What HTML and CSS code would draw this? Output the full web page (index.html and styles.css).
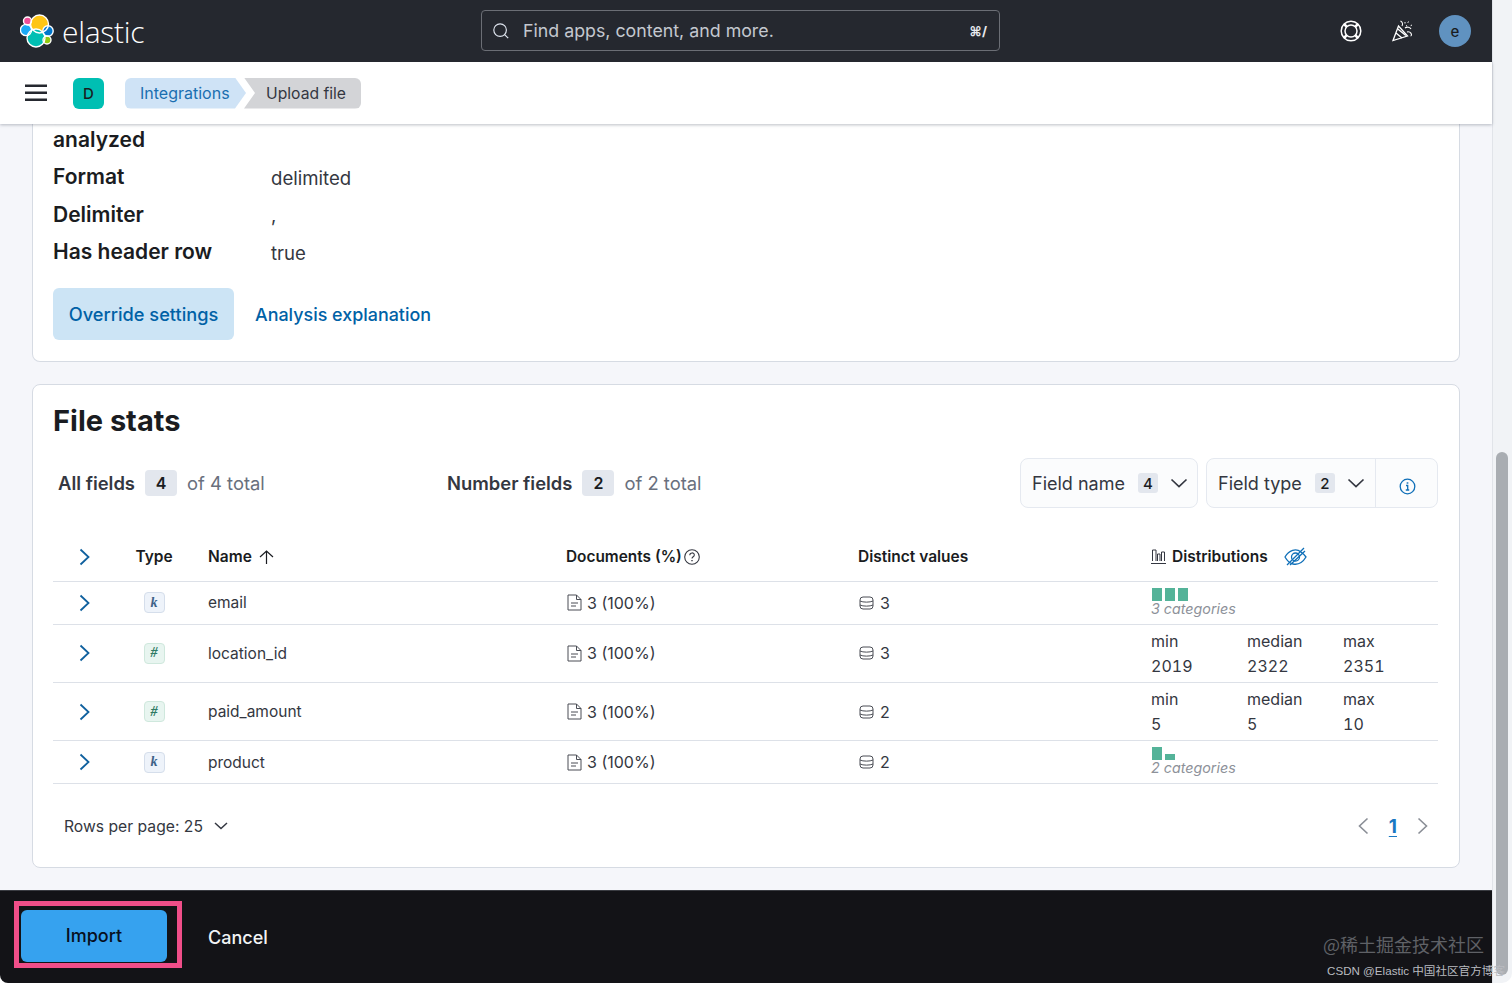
FILE: index.html
```html
<!DOCTYPE html>
<html lang="en">
<head>
<meta charset="utf-8">
<title>Upload file - Elastic</title>
<link rel="stylesheet" href="styles.css">
</head>
<body>
<div class="window">
  <div class="main">
    <header class="topbar">
      <div class="brand">
        <svg class="logo" width="34" height="34" viewBox="0 0 34 34">
          <circle cx="19.5" cy="10" r="9" fill="#fec514"/>
          <circle cx="7.5" cy="7" r="4" fill="#f04e98"/>
          <circle cx="6" cy="16" r="5.6" fill="#1ba9f5"/>
          <circle cx="28" cy="17" r="5.2" fill="#0077cc"/>
          <circle cx="16" cy="24" r="9" fill="#00bfb3"/>
          <circle cx="27" cy="26" r="4" fill="#93c90e"/>
          <g fill="none" stroke="#fff" stroke-width="1.4">
            <circle cx="19.5" cy="10" r="9"/>
            <circle cx="16" cy="24" r="9"/>
            <circle cx="6" cy="16" r="5.6"/>
            <circle cx="28" cy="17" r="5.2"/>
            <circle cx="7.5" cy="7" r="4"/>
            <circle cx="27" cy="26" r="4"/>
          </g>
        </svg>
        <span class="wordmark">elastic</span>
      </div>
      <div class="search">
        <svg width="18" height="18" viewBox="0 0 20 20" fill="none" stroke="#dfe5ef" stroke-width="1.3"><circle cx="9" cy="9" r="7"/><path d="M14 14l4 4"/></svg>
        <span class="search-text">Find apps, content, and more.</span>
        <span class="search-key">⌘/</span>
      </div>
      <div class="top-icons">
        <svg width="24" height="24" viewBox="0 0 24 24" fill="none" stroke="#fff" stroke-width="1.5"><circle cx="12" cy="12" r="9.8"/><circle cx="12" cy="12" r="6"/><path d="M5 5l2.8 2.8M19 5l-2.8 2.8M5 19l2.8-2.8M19 19l-2.8-2.8" stroke-width="2.6"/></svg>
        <svg width="24" height="24" viewBox="0 0 24 24" fill="none" stroke="#fff" stroke-width="1.3"><path d="M7.5 7L2 21.5 16.5 17z"/><path d="M5 14l6 5M6.8 10l8 6.4"/><path d="M9.5 2c2 1 2.500 3 1.500 5M14 9c2-1.500 5-1 6 1M16 13c2-.5 4 .5 4.500 2.500 0 1-.5 1.500-1 1.500" stroke-width="1.100"/><path d="M14 3v2M17.500 2.500l-1 2M21 6l-2 1M15 6.500l1 .5" stroke-width="1" stroke-dasharray="1.500 1"/></svg>
        <span class="avatar">e</span>
      </div>
    </header>

    <nav class="subbar">
      <svg class="menu" width="22" height="18" viewBox="0 0 22 18" fill="#25282f"><rect width="22" height="2.500" y="0.500"/><rect width="22" height="2.500" y="7.500"/><rect width="22" height="2.500" y="14.500"/></svg>
      <span class="space">D</span>
      <div class="crumbs">
        <span class="crumb crumb-link">Integrations</span>
        <span class="crumb crumb-current">Upload file</span>
      </div>
    </nav>

    <main class="content">
      <section class="card card-summary">
        <dl class="summary">
          <dt>analyzed</dt><dd></dd>
          <dt>Format</dt><dd>delimited</dd>
          <dt>Delimiter</dt><dd>,</dd>
          <dt>Has header row</dt><dd>true</dd>
        </dl>
        <div class="summary-actions">
          <button class="btn-soft">Override settings</button>
          <a class="link-strong">Analysis explanation</a>
        </div>
      </section>

      <section class="card card-stats">
        <h2 class="stats-title">File stats</h2>
        <div class="stats-bar">
          <div class="stat stat-all"><b>All fields</b><span class="count">4</span><span class="muted">of 4 total</span></div>
          <div class="stat"><b>Number fields</b><span class="count">2</span><span class="muted">of 2 total</span></div>
          <div class="filters">
            <div class="filter filter-name">Field name<span class="mini-count">4</span><svg class="chev-down" width="18" height="10" viewBox="0 0 18 10" fill="none" stroke="#343741" stroke-width="1.700"><path d="M1.500 1.500L9 8.500l7.500-7"/></svg></div>
            <div class="filter-group">
              <div class="filter filter-type">Field type<span class="mini-count">2</span><svg class="chev-down" width="18" height="10" viewBox="0 0 18 10" fill="none" stroke="#343741" stroke-width="1.700"><path d="M1.500 1.500L9 8.500l7.500-7"/></svg></div>
              <div class="filter-info"><svg width="17" height="17" viewBox="0 0 17 17" fill="none" stroke="#0f6fb8" stroke-width="1.300"><circle cx="8.500" cy="8.500" r="7.300"/><path d="M7 7.500h1.700v4.500M6.800 12h3.400" /><path d="M8.500 4.300v1.400" stroke-width="1.700"/></svg></div>
            </div>
          </div>
        </div>

        <div class="table">
          <div class="row row-head">
            <svg class="expander" width="11" height="18" viewBox="0 0 11 18" fill="none" stroke="#0f609e" stroke-width="1.800"><path d="M1.500 1.500L9.500 9l-8 7.500"/></svg>
            <span class="cell-type">Type</span>
            <span class="cell-name">Name <svg class="sort" width="15" height="14" viewBox="0 0 15 14" fill="none" stroke="#1a1c21" stroke-width="1.200"><path d="M7.500 14V1M1 7l6.500-6L14 7"/></svg></span>
            <span class="cell-doc">Documents (%) <svg width="16" height="16" viewBox="0 0 16 16" fill="none" stroke="#343741" stroke-width="1.100"><circle cx="8" cy="8" r="7.300"/><path d="M5.800 6.200c0-3 4.500-3 4.500-.2 0 1.800-2.300 1.700-2.300 3.600" /><path d="M8 11v1.300" stroke-width="1.400"/></svg></span>
            <span>Distinct values</span>
            <span class="cell-dist"><svg width="15" height="15" viewBox="0 0 15 15" fill="none" stroke="#343741" stroke-width="1"><path d="M0 14.500h15M1.500 12V1h3.500v11M6.500 12V5h2.500v7M10.500 12V3h3v9"/></svg> Distributions <svg class="eye" width="23" height="19" viewBox="0 0 23 19" fill="none" stroke="#0f6fb8" stroke-width="1.300"><path d="M1 10c4-7 11-9 16-5 2 1.500 3.500 3 5 5-3 5-8 8-13 7-3-.5-6-3.500-8-7z"/><circle cx="11.500" cy="10" r="4"/><path d="M3 18L20 1M6 18L21 4"/></svg></span>
          </div>

          <div class="row row-a">
            <svg class="expander" width="11" height="18" viewBox="0 0 11 18" fill="none" stroke="#0f609e" stroke-width="1.800"><path d="M1.500 1.500L9.500 9l-8 7.500"/></svg>
            <span class="cell-type"><i class="token token-k">k</i></span>
            <span class="cell-name">email</span>
            <span class="cell-doc"><svg class="doc" width="15" height="17" viewBox="0 0 15 17" fill="none" stroke="#4a4d55" stroke-width="1"><path d="M1 1h8.500L14 5.500V16H1zM9.500 1v4.500H14M4 9h7M4 12h5"/></svg> 3 (100%)</span>
            <span class="cell-val"><svg class="db" width="15" height="14" viewBox="0 0 15 14" fill="none" stroke="#4a4d55" stroke-width="1"><rect x="1" y="1" width="13" height="12" rx="3"/><path d="M1 5c3 1.500 10 1.500 13 0M1 9c3 1.500 10 1.500 13 0"/></svg> 3</span>
            <div class="bars-cell"><div class="bars"><i class="bar"></i><i class="bar"></i><i class="bar"></i></div><em>3 categories</em></div>
          </div>

          <div class="row row-b">
            <svg class="expander" width="11" height="18" viewBox="0 0 11 18" fill="none" stroke="#0f609e" stroke-width="1.800"><path d="M1.500 1.500L9.500 9l-8 7.500"/></svg>
            <span class="cell-type"><i class="token token-n">#</i></span>
            <span class="cell-name">location_id</span>
            <span class="cell-doc"><svg class="doc" width="15" height="17" viewBox="0 0 15 17" fill="none" stroke="#4a4d55" stroke-width="1"><path d="M1 1h8.500L14 5.500V16H1zM9.500 1v4.500H14M4 9h7M4 12h5"/></svg> 3 (100%)</span>
            <span class="cell-val"><svg class="db" width="15" height="14" viewBox="0 0 15 14" fill="none" stroke="#4a4d55" stroke-width="1"><rect x="1" y="1" width="13" height="12" rx="3"/><path d="M1 5c3 1.500 10 1.500 13 0M1 9c3 1.500 10 1.500 13 0"/></svg> 3</span>
            <div class="nums"><span>min</span><span>median</span><span>max</span><span>2019</span><span>2322</span><span>2351</span></div>
          </div>

          <div class="row row-b">
            <svg class="expander" width="11" height="18" viewBox="0 0 11 18" fill="none" stroke="#0f609e" stroke-width="1.800"><path d="M1.500 1.500L9.500 9l-8 7.500"/></svg>
            <span class="cell-type"><i class="token token-n">#</i></span>
            <span class="cell-name">paid_amount</span>
            <span class="cell-doc"><svg class="doc" width="15" height="17" viewBox="0 0 15 17" fill="none" stroke="#4a4d55" stroke-width="1"><path d="M1 1h8.500L14 5.500V16H1zM9.500 1v4.500H14M4 9h7M4 12h5"/></svg> 3 (100%)</span>
            <span class="cell-val"><svg class="db" width="15" height="14" viewBox="0 0 15 14" fill="none" stroke="#4a4d55" stroke-width="1"><rect x="1" y="1" width="13" height="12" rx="3"/><path d="M1 5c3 1.500 10 1.500 13 0M1 9c3 1.500 10 1.500 13 0"/></svg> 2</span>
            <div class="nums"><span>min</span><span>median</span><span>max</span><span>5</span><span>5</span><span>10</span></div>
          </div>

          <div class="row row-a">
            <svg class="expander" width="11" height="18" viewBox="0 0 11 18" fill="none" stroke="#0f609e" stroke-width="1.800"><path d="M1.500 1.500L9.500 9l-8 7.500"/></svg>
            <span class="cell-type"><i class="token token-k">k</i></span>
            <span class="cell-name">product</span>
            <span class="cell-doc"><svg class="doc" width="15" height="17" viewBox="0 0 15 17" fill="none" stroke="#4a4d55" stroke-width="1"><path d="M1 1h8.500L14 5.500V16H1zM9.500 1v4.500H14M4 9h7M4 12h5"/></svg> 3 (100%)</span>
            <span class="cell-val"><svg class="db" width="15" height="14" viewBox="0 0 15 14" fill="none" stroke="#4a4d55" stroke-width="1"><rect x="1" y="1" width="13" height="12" rx="3"/><path d="M1 5c3 1.500 10 1.500 13 0M1 9c3 1.500 10 1.500 13 0"/></svg> 2</span>
            <div class="bars-cell"><div class="bars"><i class="bar"></i><i class="bar bar-low"></i></div><em>2 categories</em></div>
          </div>
        </div>

        <div class="pager">
          <span class="rows-per">Rows per page: 25 <svg width="14" height="8" viewBox="0 0 14 8" fill="none" stroke="#343741" stroke-width="1.500"><path d="M1 1l6 5.500L13 1"/></svg></span>
          <div class="pages">
            <svg width="11" height="18" viewBox="0 0 11 18" fill="none" stroke="#8a8e96" stroke-width="1.600"><path d="M9.500 1.500L1.500 9l8 7.500"/></svg>
            <a class="page-num">1</a>
            <svg width="11" height="18" viewBox="0 0 11 18" fill="none" stroke="#8a8e96" stroke-width="1.600"><path d="M1.500 1.500L9.500 9l-8 7.500"/></svg>
          </div>
        </div>
      </section>
    </main>

    <footer class="footbar">
      <div class="highlight"><button class="btn-import">Import</button></div>
      <a class="btn-cancel">Cancel</a>
    </footer>
  </div>
  <div class="scrolltrack"><div class="scrollthumb"></div></div>
  <div class="watermark"><span class="wm-big">@稀土掘金技术社区</span><span class="wm-small">CSDN @Elastic 中国社区官方博客</span></div>
</div>
</body>
</html>
```
FILE: styles.css
```css
* { box-sizing: border-box; }
html, body { margin: 0; height: 983px; overflow: hidden; }
body { font-family: Inter, "Liberation Sans", sans-serif; color: #343741; background: #fff; }

.window { position: relative; display: flex; width: 1512px; height: 983px; overflow: hidden; border-radius: 0 0 10px 8px; }
.main { width: 1492px; height: 983px; display: flex; flex-direction: column; flex: none; }

.topbar { height: 62px; flex: none; background: #25282f; display: flex; align-items: center; padding-left: 20px; position: relative; z-index: 3; }
.brand { display: flex; align-items: center; width: 461px; }
.logo { flex: none; }
.wordmark { color: #fff; font-family: "Open Sans", Inter, sans-serif; font-size: 30px; font-weight: 300; margin-left: 8px; letter-spacing: -0.3px; }
.search { width: 519px; height: 41px; margin-bottom: 1px; border: 1px solid #6b6e75; border-radius: 4px; display: flex; align-items: center; padding: 0 12px 0 10px; }
.search-text { margin-left: 13px; color: #c4c8cf; font-size: 17.8px; flex: 1; }
.search-key { color: #e8eaee; font-size: 13px; font-weight: 700; }
.top-icons { margin-left: 339px; display: flex; align-items: center; gap: 28px; }
.avatar { width: 32px; height: 32px; border-radius: 50%; background: #6092c0; color: #1a1c21; display: flex; align-items: center; justify-content: center; font-size: 15px; font-weight: 500; margin-left: -4px; }

.subbar { height: 62px; flex: none; background: #fff; display: flex; align-items: center; padding-left: 25px; box-shadow: 0 1px 3px rgba(60,70,90,.35); position: relative; z-index: 2; }
.menu { flex: none; }
.space { width: 31px; height: 31px; border-radius: 6px; background: #00bfb3; color: #1a1c21; font-size: 15px; font-weight: 500; display: flex; align-items: center; justify-content: center; margin-left: 26px; }
.crumbs { display: flex; margin-left: 21px; }
.crumb { height: 31px; display: flex; align-items: center; font-size: 16px; }
.crumb-link { width: 121px; padding-left: 15px; color: #1a6fb0; background: #cfe3f6; border-radius: 6px 0 0 6px; clip-path: polygon(0 0, 110px 0, 121px 50%, 110px 100%, 0 100%); }
.crumb-current { width: 117px; margin-left: -2px; padding-left: 22px; font-size: 15.7px; color: #343741; background: #d3d4d7; border-radius: 0 6px 6px 0; clip-path: polygon(0 0, 100% 0, 100% 100%, 0 100%, 11px 50%); }

.content { flex: 1; min-height: 0; padding: 0 32px; background: #f5f6fa; overflow: hidden; }
.card { background: #fff; border: 1px solid #d6dbe3; border-radius: 8px; padding: 0 21px 0 20px; display: flow-root; }
.card-summary { height: 238px; border-top: 0; border-radius: 0 0 8px 8px; margin-bottom: 22px; }
.summary { margin: -3.5px 0 0; display: grid; grid-template-columns: 218px 1fr; grid-auto-rows: 37.5px; align-items: center; }
.summary dt { font-size: 21px; font-weight: 600; color: #1a1c21; }
.summary dd { margin: 0; padding-top: 2px; font-size: 18.6px; color: #343741; }
.summary-actions { display: flex; align-items: center; margin-top: 17.5px; }
.btn-soft { width: 181px; height: 52px; border: 0; border-radius: 6px; background: #cce4f5; color: #0061a6; font: 500 18.2px Inter, sans-serif; }
.link-strong { margin-left: 21px; color: #0061a6; font-size: 17.9px; font-weight: 500; }

.card-stats { height: 484px; }
.stats-title { margin: 0; padding-top: 18px; font-size: 29px; line-height: 36px; font-weight: 700; color: #1a1c21; }
.stats-bar { display: flex; align-items: center; margin-top: 18px; height: 52px; }
.stat { display: flex; align-items: center; font-size: 18.4px; }
.stat b { font-weight: 600; color: #343741; }
.stat-all { margin-left: 5px; width: 389px; }
.count { width: 32px; height: 26px; background: #e3e7ee; border-radius: 4px; margin: 0 10px; display: flex; align-items: center; justify-content: center; font-size: 16px; font-weight: 600; color: #1a1c21; }
.muted { color: #69707d; }
.filters { margin-left: auto; display: flex; gap: 8px; }
.filter, .filter-info { height: 50px; display: flex; align-items: center; font-size: 18px; color: #343741; }
.filter-name { width: 178px; background: #fbfcfd; border: 1px solid #e5e9f0; border-radius: 8px; padding-left: 11px; }
.filter-group { display: flex; width: 232px; background: #fbfcfd; border: 1px solid #e5e9f0; border-radius: 8px; }
.filter-group .filter, .filter-group .filter-info { height: 48px; }
.filter-type { width: 169px; padding-left: 11px; border-right: 1px solid #e5e9f0; }
.filter-info { flex: 1; justify-content: center; padding-top: 6px; padding-left: 1px; }
.mini-count { width: 20px; height: 20px; background: #e3e7ee; border-radius: 3px; display: flex; align-items: center; justify-content: center; font-size: 15px; font-weight: 500; color: #1a1c21; margin-left: 13px; }
.chev-down { margin-left: 12px; }

.table { margin-top: 23px; font-size: 15.5px; }
.row { display: grid; grid-template-columns: 62px 78px 373px 292px 293px 1fr; align-items: center; border-bottom: 1px solid #dde1e8; }
.row > .expander { margin-left: 26px; }
.row-head { height: 50px; font-weight: 600; color: #1a1c21; }
.row-a { height: 42.75px; }
.row-b { height: 58.25px; }
.cell-type { display: flex; justify-content: center; }
.cell-name { padding-left: 15px; display: flex; align-items: center; gap: 7px; }
.cell-doc, .cell-val { display: flex; align-items: center; gap: 6px; font-size: 16px; }
.cell-doc .doc, .cell-val .db { margin-left: 1px; }
.cell-doc .doc { margin-right: -1px; }
.row-head .cell-doc { gap: 2px; font-size: 15.4px; }
.cell-dist { display: flex; align-items: center; gap: 6px; }
.eye { margin-left: 10px; }
.token { width: 21px; height: 21px; border-radius: 4px; display: flex; align-items: center; justify-content: center; font: italic 700 14px "Liberation Serif", serif; }
.token-k { background: #eef3fa; border: 1px solid #d5deeb; color: #3e6288; }
.token-n { background: #e8f5f0; border: 1px solid #cfe8dd; color: #2f7a64; }
.bars-cell { display: flex; flex-direction: column; margin-top: -2px; }
.bars-cell em { color: #8d9199; font-size: 14.3px; line-height: 15px; }
.bars { display: flex; align-items: flex-end; gap: 3px; height: 13px; margin-left: 1px; }
.bar { width: 10px; height: 13px; background: #54b399; }
.bar-low { height: 6px; }
.nums { display: grid; grid-template-columns: 96px 96px 1fr; grid-auto-rows: 25.5px; align-items: center; font-size: 16px; }
.nums span:nth-child(n+4) { font-variant-numeric: tabular-nums; }

.pager { display: flex; align-items: center; justify-content: space-between; height: 86px; padding: 0 10px 2px 11px; }
.rows-per { font-size: 15.7px; color: #343741; display: flex; align-items: center; gap: 11px; }
.pages { display: flex; align-items: center; gap: 20px; }
.page-num { color: #1a78c2; font-weight: 700; font-size: 19px; text-decoration: underline; text-underline-offset: 3px; }

.footbar { height: 93px; flex: none; background: #131317; border-top: 1px solid #3a3c42; display: flex; align-items: center; padding-left: 14px; }
.highlight { border: 5px solid #f04e89; padding: 4px 10px 1px 2px; margin-bottom: 6px; }
.btn-import { display: block; width: 146px; height: 52px; border: 0; border-radius: 6px; background: #36a2ef; color: #07101f; font: 500 18px Inter, sans-serif; }
.btn-cancel { margin-left: 26px; color: #f2f3f5; font-size: 18px; font-weight: 500; }

.scrolltrack { flex: 1; background: #f1f3f6; border-left: 1px solid #e1e4e9; display: flex; flex-direction: column; padding: 452px 4px 8px 3px; }
.scrollthumb { flex: 1; background: #a9adb2; border-radius: 6px; }

.watermark { position: absolute; right: 0; bottom: 0; width: 200px; height: 60px; font-family: "Noto Sans CJK SC", Inter, sans-serif; display: flex; flex-direction: column; align-items: flex-end; }
.wm-big { font-size: 18px; color: #5f6166; line-height: 26px; margin: 8px 28px 0 0; white-space: nowrap; }
.wm-small { font-family: "Liberation Sans", "Noto Sans CJK SC", sans-serif; font-size: 11.6px; color: #b9bbc0; line-height: 18px; margin: 5px 7px 0 0; white-space: nowrap; }
```
